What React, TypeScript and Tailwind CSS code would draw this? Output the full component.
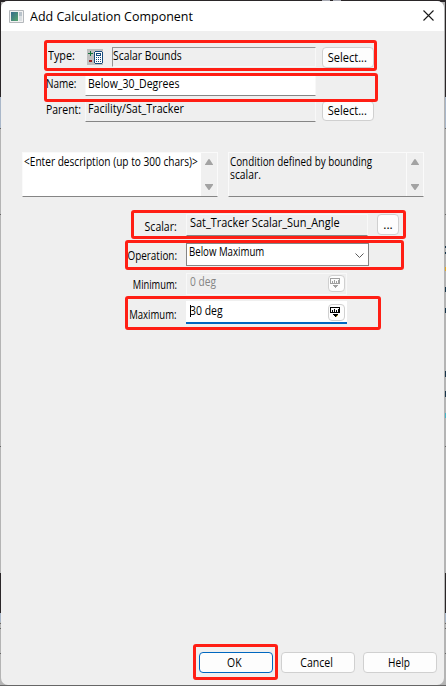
import type { ReactNode } from 'react';

function Label({ children, className }: { children: ReactNode; className: string }) {
  return <span className={`shrink-0 whitespace-nowrap leading-4 ${className}`}>{children}</span>;
}

function Text({ children, className }: { children: ReactNode; className: string }) {
  return <span className={`inline-block whitespace-nowrap ${className}`}>{children}</span>;
}

function Field({ children, className }: { children: ReactNode; className: string }) {
  return (
    <div className={`shrink-0 whitespace-nowrap border border-[#f8f8f8] ${className}`}>{children}</div>
  );
}

function Button({ children, className }: { children: ReactNode; className: string }) {
  return (
    <button className={`flex shrink-0 items-center justify-center rounded-[4px] border bg-[#fdfdfd] leading-4 ${className}`}>
      {children}
    </button>
  );
}

function ScrollArrows() {
  return (
    <svg width="16" height="43" viewBox="0 0 16 43" className="shrink-0" fill="#a3a3a3">
      <path d="M4 11.5 7.2 6.5Q8 5.5 8.8 6.5L12 11.5V12H4ZM4 31H12V32L8.8 36.5Q8 37.5 7.2 36.5L4 32Z" />
    </svg>
  );
}

function CalculatorIcon() {
  return (
    <svg width="16" height="16" viewBox="0 0 16 16" className="shrink-0" shapeRendering="crispEdges">
      <path fill="#c0c0c0" d="M0 0h16v16H0z" />
      <path fill="#16713c" d="M1 4h5v1H1zM3 2h1v5H3z" />
      <path fill="#982222" d="M2 11h3v2H2z" />
      <path fill="#164b7d" d="M8 2h7v1H8zM7 3h1v11H7zM15 3h1v11h-1zM8 14h7v1H8z" />
      <path fill="#fff" d="M8 3h7v11H8z" />
      <path fill="#164b7d" d="M9 4h5v1H9zM9 5h1v1H9zM13 5h1v1h-1zM9 6h5v1H9zM9 8h1v1H9zM11 8h1v1h-1zM13 8h1v1h-1zM9 10h1v1H9zM11 10h1v1h-1zM13 10h1v1h-1zM9 12h1v1H9zM11 12h1v1h-1zM13 12h1v1h-1z" />
    </svg>
  );
}

function UnitButton({ disabled = false }: { disabled?: boolean }) {
  const ink = disabled ? '#a0a0a0' : '#000';
  return (
    <Button className="h-[17px] w-[17px] border-[#d0d0d0] pr-[2px]">
      <svg width="11" height="11" viewBox="0 0 11 11" className="shrink-0" shapeRendering="crispEdges" fill={ink}>
        <path d="M0 0h10v1H0zM0 1h1v5H0zM9 1h1v5H9zM0 5h10v1H0zM2 3h1v2H2zM4 2h1v3H4zM6 3h1v2H6zM8 2h1v3H8zM3 7h5v1H3zM4 8h3v1H4zM5 9h1v1H5z" />
        {!disabled && <path fill="#c9b84c" d="M7 8h1v1H7zM6 9h1v1H6z" />}
      </svg>
    </Button>
  );
}

function Highlight({ className }: { className: string }) {
  return <div className={`pointer-events-none absolute rounded-[3px] border-[3px] border-[#ff1e14] ${className}`} />;
}

export default function App() {
  return (
    <div className="relative h-[686px] w-[446px] overflow-hidden bg-[#b4b4b4] pl-px pt-px text-[12px] text-black [font-family:'Open_Sans','Noto_Sans',sans-serif]">
      <svg className="absolute inset-0" width="446" height="686" shapeRendering="crispEdges">
        <path fill="#2a2628" d="M0 0h446v2H0zM0 0h1v97H0zM445 0h1v97h-1zM0 573h1v40H0zM445 573h1v40h-1z" />
        <path fill="#a9abb4" d="M322 0h8v1h-8zM333 0h8v1h-8z" />
        <path fill="#a9b7c9" d="M0 97h1v32H0zM445 97h1v32h-1zM0 613h1v9H0zM445 613h1v9h-1z" />
        <path fill="#666" d="M0 128h1v1H0zM445 128h1v1h-1zM0 214h1v1H0zM445 214h1v1h-1zM0 446h1v1H0zM445 446h1v1h-1zM0 623h1v1H0zM445 623h1v1h-1zM0 628h1v1H0zM445 628h1v1h-1zM0 653h1v1H0zM445 653h1v1h-1zM0 685h446v1H0z" />
        <path fill="#17354a" d="M445 246h1v2h-1zM445 252h1v2h-1zM445 287h1v5h-1zM445 308h1v5h-1zM445 371h1v6h-1zM445 391h1v6h-1z" />
        <path fill="#e4a71d" d="M445 267h1v4h-1z" />
        <path fill="#45b5c8" d="M445 413h1v5h-1z" />
      </svg>

      <main className="relative flex h-[684px] w-[443px] flex-col overflow-hidden rounded-[7px] bg-[#efefef]">
        <header className="flex h-[30px] shrink-0 items-center bg-white pl-2 pr-[10px]">
          <svg width="15" height="13" viewBox="0 0 15 13" className="shrink-0">
            <defs>
              <linearGradient id="pane" x2="1" y2="1">
                <stop stopColor="#356b8c" />
                <stop offset="1" stopColor="#57a66d" />
              </linearGradient>
            </defs>
            <path fill="#f2f2f2" stroke="#b4b8bc" d="M.5.5h14v12H.5z" />
            <path fill="url(#pane)" d="M2 2h7v9H2z" />
            <path fill="#b9c3cb" d="M10 2h3v4h-3z" />
            <path fill="#dadfe2" d="M10 6h3v5h-3z" />
          </svg>
          <h1 className="ml-[6px] grow whitespace-nowrap text-[13px] leading-4">
            <Text className="origin-left scale-x-[0.96]">Add Calculation Component</Text>
          </h1>
          <svg width="11" height="11" viewBox="0 0 11 11" className="-mt-px shrink-0" stroke="#191919" strokeWidth="1.1">
            <path d="m.5.5 10 10m0-10-10 10" />
          </svg>
        </header>

        <section className="flex flex-col pt-4">
          <div className="flex h-7 items-start">
            <Label className="ml-[47px] mt-[1px] w-[39px]"><Text className="origin-left scale-x-[0.9]">Type:</Text></Label>
            <div className="mt-[2px]"><CalculatorIcon /></div>
            <div className="ml-[9px] h-5 w-[204px] shrink-0 border border-b-[#f8f8f8] border-l-[#969696] border-r-[#f8f8f8] border-t-[#969696] leading-[15px]">
              <Text className="origin-left scale-x-[0.865]">Scalar Bounds</Text>
            </div>
            <Button className="ml-[6px] h-[21px] w-[52px] border-[#d0d0d0]"><Text className="-ml-px scale-x-[0.92]">Select...</Text></Button>
          </div>
          <div className="flex h-[26px] items-start">
            <Label className="ml-[45px] mt-px w-[39px]"><Text className="origin-left scale-x-[0.83]">Name:</Text></Label>
            <Field className="h-[21px] w-[231px] border-b-[#858585] bg-white pl-[2px] leading-[16px]">
              <Text className="origin-left scale-x-[0.876]">Below_30_Degrees</Text>
            </Field>
          </div>
          <div className="flex h-[51px] items-start">
            <Label className="ml-[45px] mt-px w-[39px]"><Text className="origin-left scale-x-[0.87]">Parent:</Text></Label>
            <Field className="h-[21px] w-[231px] border-b-[#858585] pl-[2px] leading-[14px]">
              <Text className="origin-left scale-x-[0.895]">Facility/Sat_Tracker</Text>
            </Field>
            <Button className="ml-[6px] h-5 w-[52px] border-[#d0d0d0]"><Text className="-ml-px scale-x-[0.92]">Select...</Text></Button>
          </div>
        </section>

        <section className="flex h-[62px] items-start gap-[10px] pl-[21px]">
          <div className="flex h-[45px] w-[196px] border border-[#fafafa] border-b-[#858585] bg-white">
            <p className="w-[178px] shrink-0 pl-[1px] pt-[1px] leading-4">
              <Text className="origin-left scale-x-[0.843]">&lt;Enter description (up to 300 chars)&gt;</Text>
            </p>
            <div className="flex w-[16px] bg-[#f0f0f0]"><ScrollArrows /></div>
          </div>
          <div className="flex h-[45px] w-[196px] border border-[#fafafa] border-b-[#858585]">
            <p className="flex w-[178px] shrink-0 flex-col items-start border-r border-[#fafafa] pl-[1px] pt-[2px] leading-[13px]">
              <Text className="origin-left scale-x-[0.82]">Condition defined by bounding</Text>
              <Text className="origin-left scale-x-[0.86]">scalar.</Text>
            </p>
            <ScrollArrows />
          </div>
        </section>

        <section className="flex flex-col">
          <div className="flex h-[29px] items-start">
            <Label className="mt-[5px] w-[176px] text-right"><Text className="origin-right scale-x-[0.875]">Scalar:</Text></Label>
            <Field className="ml-[9px] h-[22px] w-[182px] border-b-[#858585] pl-[3px] leading-4">
              <Text className="origin-left scale-x-[0.91]">Sat_Tracker Scalar_Sun_Angle</Text>
            </Field>
            <Button className="ml-[9px] h-[21px] w-[22px] border-[#d0d0d0]">...</Button>
          </div>
          <div className="flex h-[30px] items-start">
            <Label className="mt-[5px] w-[176px] text-right"><Text className="origin-right scale-x-[0.825]">Operation:</Text></Label>
            <div className="ml-[9px] flex h-[23px] w-[183px] items-start border border-[#858585] bg-white pl-[2px] leading-4">
              <span className="grow"><Text className="origin-left scale-x-[0.805]">Below Maximum</Text></span>
              <svg width="9" height="5" viewBox="0 0 9 5" className="mr-[4px] mt-[9px]" fill="none" stroke="#5b5b5b">
                <path d="m.5.5 4 4 4-4" />
              </svg>
            </div>
          </div>
          <div className="flex h-[28px] items-start">
            <Label className="mt-[4px] w-[176px] text-right"><Text className="origin-right scale-x-[0.775]">Minimum:</Text></Label>
            <Field className="ml-[9px] flex h-[22px] w-[161px] pl-[3px] pr-[1px] pt-px leading-[14px] text-[#858585]">
              <span className="grow"><Text className="origin-left scale-x-[0.85]">0 deg</Text></span><UnitButton disabled />
            </Field>
          </div>
          <div className="flex items-start">
            <Label className="mt-[6px] w-[176px] text-right"><Text className="origin-right scale-x-[0.795]">Maximum:</Text></Label>
            <div className="ml-[9px] flex h-[23px] w-[161px] border-b-2 border-[#0067c0] bg-white pl-[4px] pr-[2px] pt-[3px]">
              <span className="mt-[1px] h-[12px] w-px bg-black" />
              <span className="-ml-px grow leading-[14px]"><Text className="origin-left scale-x-[0.87]">30 deg</Text></span><UnitButton />
            </div>
          </div>
        </section>

        <footer className="mt-auto flex gap-2 pb-3 pl-[198px]">
          <Button className="h-[21px] w-[74px] border-[#0067c0]"><Text className="-ml-[3px] scale-x-[0.87]">OK</Text></Button>
          <Button className="h-[21px] w-[74px] border-[#d0d0d0]"><Text className="-ml-[2px] scale-x-[0.88]">Cancel</Text></Button>
          <Button className="h-[21px] w-[74px] border-[#d0d0d0]"><Text className="-ml-[2px] scale-x-[0.84]">Help</Text></Button>
        </footer>
      </main>

      <Highlight className="left-[44px] top-[40px] h-[31px] w-[333px]" />
      <Highlight className="left-[44px] top-[73px] h-[29px] w-[334px]" />
      <Highlight className="left-[131px] top-[210px] h-[29px] w-[275px]" />
      <Highlight className="left-[125px] top-[240px] h-[30px] w-[279px]" />
      <Highlight className="left-[125px] top-[296px] h-[34px] w-[256px]" />
      <Highlight className="left-[193px] top-[644px] h-[36px] w-[85px]" />
    </div>
  );
}
